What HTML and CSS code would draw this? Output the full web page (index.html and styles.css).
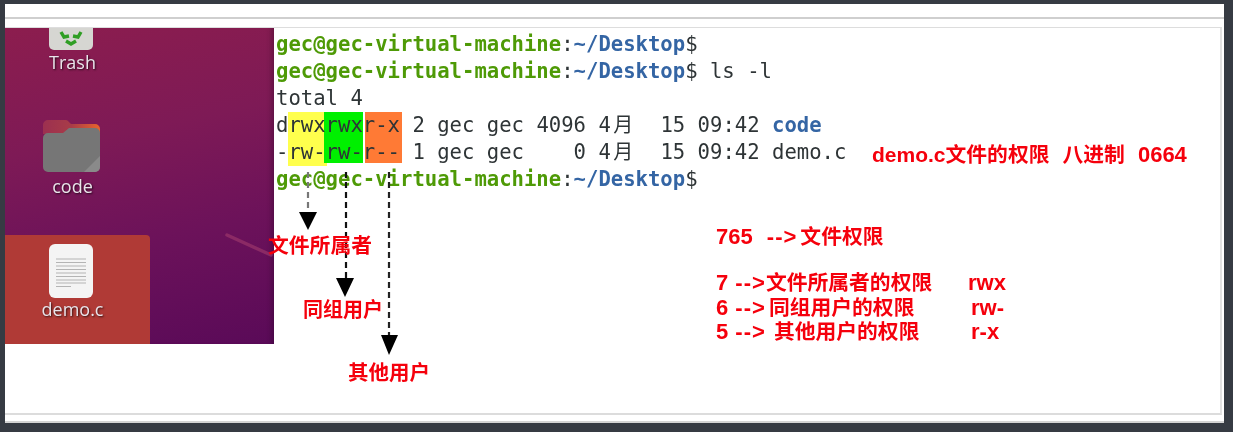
FILE: index.html
```html
<!DOCTYPE html>
<html lang="zh">
<head>
<meta charset="utf-8">
<title>ls -l</title>
<link rel="stylesheet" href="styles.css">
</head>
<body>
<div class="frame">
  <div class="topbar"></div>
  <div class="shot">
    <aside class="desktop">
      <svg class="streak" width="60" height="30" viewBox="0 0 60 30"><path d="M6 6 L50 26" stroke="#a8406f" stroke-width="3.500" stroke-linecap="round" fill="none" opacity=".55"/></svg>
      <div class="item item-trash">
        <svg class="shift" width="44" height="23" viewBox="0 0 44 23"><path d="M0 0H44V17a5 5 0 0 1-5 5H5a5 5 0 0 1-5-5Z" fill="#d6d6d2"/><path d="M12 4l3 5 5-1M32 4l-3 5-5-1M17 13l5 3 5-3" stroke="#2f9e24" stroke-width="3.400" fill="none"/></svg>
        <span class="label">Trash</span>
      </div>
      <div class="item item-code">
        <svg width="57" height="52" viewBox="0 0 57 52">
          <defs><linearGradient id="tab" x1="0" x2="1" y1="0" y2="0"><stop offset="0" stop-color="#9c3050"/><stop offset=".5" stop-color="#a83c48"/><stop offset="1" stop-color="#e8642c"/></linearGradient></defs>
          <path d="M0 14V5a5 5 0 0 1 5-5H22a4 4 0 0 1 3 1l3 3H52a5 5 0 0 1 5 5V14Z" fill="url(#tab)"/>
          <path d="M0 18a5 5 0 0 1 5-5H20l6-5H52a5 5 0 0 1 5 5V47a5 5 0 0 1-5 5H5a5 5 0 0 1-5-5Z" fill="#767676"/>
          <path d="M57 36L41 52H52a5 5 0 0 0 5-5Z" fill="#8a8a8a"/>
        </svg>
        <span class="label">code</span>
      </div>
      <div class="item item-demo">
        <svg class="shift" width="44" height="54" viewBox="0 0 44 54"><rect width="44" height="54" rx="6" fill="#f4f4f4"/><path d="M7 15H37M7 18.500H37M7 22H37M7 25.500H37M7 29H37M7 32.500H37M7 36H37M7 39H37" stroke="#b4b4b4" stroke-width="1"/><path d="M7 42.500H22" stroke="#b4b4b4" stroke-width="1"/></svg>
        <span class="label">demo.c</span>
      </div>
    </aside>
    <main class="term">
      <div class="line"><b class="g">gec@gec-virtual-machine</b>:<b class="b">~/Desktop</b>$</div>
      <div class="line"><b class="g">gec@gec-virtual-machine</b>:<b class="b">~/Desktop</b>$ ls -l</div>
      <div class="line">total 4</div>
      <div class="line top">d<span class="hy">rwx</span><span class="hg">rwx</span><span class="ho">r-x</span> 2 gec gec 4096 4<span class="cjk">月</span>  15 09:42 <b class="b">code</b></div>
      <div class="line bot">-<span class="hy">rw-</span><span class="hg">rw-</span><span class="ho">r--</span> 1 gec gec    0 4<span class="cjk">月</span>  15 09:42 demo.c</div>
      <div class="line"><b class="g">gec@gec-virtual-machine</b>:<b class="b">~/Desktop</b>$</div>
    </main>
    <svg class="arrows" width="120" height="190" viewBox="0 0 120 190">
      <g fill="none" stroke-width="2.200" stroke-dasharray="6 4">
        <path d="M15 0V38" stroke="#777"/>
        <path d="M53 0V106" stroke="#111"/>
        <path d="M96 0V164" stroke="#222"/>
      </g>
      <path d="M6 40H24L15 58Z M43 106H61L52 125Z M88 163H105L96 183Z" fill="#000"/>
    </svg>
    <span class="note n-owner">文件所属者</span>
    <span class="note n-group">同组用户</span>
    <span class="note n-other">其他用户</span>
    <span class="note n-octal"><span class="demo">demo.c</span>文件的权限<span class="gap1"></span>八进制<span class="gap2"></span><span class="num">0664</span></span>
    <span class="note n-765"><span class="num">765</span><span class="arr arr-wide"> --&gt;</span>文件权限</span>
    <div class="note perms">
      <span><span class="num">7</span><span class="arr"> --&gt;</span>文件所属者的权限</span><span class="num p1">rwx</span>
      <span><span class="num">6</span><span class="arr"> --&gt;</span><span class="in1">同组用户的权限</span></span><span class="num p2">rw-</span>
      <span><span class="num">5</span><span class="arr"> --&gt;</span><span class="in2">其他用户的权限</span></span><span class="num p2">r-x</span>
    </div>
  </div>
</div>
</body>
</html>
```
FILE: styles.css
```css
html, body { margin: 0; height: 432px; overflow: hidden; background: #363b43; }
.frame {
  margin: 4px 9px 0 5px; height: 419px; box-sizing: border-box;
  background: #fff; border-bottom: 2px solid #d4d4d4; filter: blur(.5px);
}
.topbar { height: 13px; border-bottom: 2px solid #cfcfcf; }
.shot {
  position: relative; display: flex; box-sizing: border-box;
  margin-top: 8px; height: 388px; margin-right: 2px;
  border-top: 1px solid #ddd; border-right: 2px solid #e2e2e2; border-bottom: 2px solid #dcdcdc;
}
.desktop {
  position: relative; flex: none; width: 269px; height: 316px; overflow: hidden;
  display: flex; flex-direction: column;
  background: linear-gradient(168deg, #8c1d4e 0%, #7e1a56 35%, #6c125a 65%, #5a0a58 100%);
  box-shadow: inset -6px 0 6px -5px rgba(30,0,30,.45);
}
.streak { position: absolute; left: 216px; top: 201px; }
.item {
  position: relative; width: 145px; box-sizing: border-box; padding-right: 12px;
  display: flex; flex-direction: column; align-items: center;
  font: 18px/22px "Open Sans", "Noto Sans", sans-serif;
}
.shift { margin-right: 2px; }
.label { margin-left: 2px; color: #e9e4ea; text-shadow: 1px 1px 2px rgba(0,0,0,.7); }
.item-trash { height: 92px; }
.item-code { height: 115px; }
.item-code .label { margin-top: 3px; }
.item-demo {
  height: 109px; padding-top: 9px;
  background: #b03a36; border-top-right-radius: 4px;
}
.term {
  flex: 1; padding: 2.500px 0 0 2px; color: #2e3436;
  font: 20.600px/27.200px "DejaVu Sans Mono", monospace;
}
.line { height: 27.200px; white-space: pre; }
.g { color: #4e9a06; }
.b { color: #3465a4; }
.cjk {
  display: inline-block; width: 24.800px; line-height: 20px; text-align: center;
  font-family: "Noto Sans CJK SC", sans-serif; font-size: 20px;
}
.hy, .hg, .ho { position: relative; }
.hy::before, .hg::before, .ho::before {
  content: ""; position: absolute; z-index: -1; top: -5px; bottom: -5px; left: 0; right: 0;
}
.hy::before { background: #ffff4d; right: -1px; }
.hg::before { background: #00f000; left: -2px; }
.ho::before { background: #ff7a35; left: 2px; right: -2px; }
.top .hy::before, .top .hg::before, .top .ho::before { top: -1px; bottom: -6px; }
.bot .hy::before { top: -5px; bottom: -2px; }
.bot .hg::before, .bot .ho::before { top: -5px; bottom: 1px; }
.arrows { position: absolute; left: 288px; top: 144px; }
.note {
  position: absolute; color: #f5000c; font-weight: 700; white-space: nowrap;
  font-family: "Liberation Sans", "Noto Sans CJK SC", sans-serif; font-size: 20.800px; line-height: 24px;
}
.n-owner { left: 263px; top: 206px; }
.n-group { left: 298px; top: 270px; font-size: 20px; }
.n-other { left: 343px; top: 333px; font-size: 20.500px; }
.n-octal { left: 867px; top: 115px; }
.demo { font-size: 21px; }
.gap1 { margin-left: 13px; }
.gap2 { margin-left: 13px; }
.num { font-size: 22px; }
.arr { font-size: 22px; letter-spacing: 1px; white-space: pre; }
.arr-wide { margin: 0 3px 0 7px; }
.n-765 { left: 711px; top: 197px; }
.perms {
  left: 711px; top: 243px; display: grid; grid-template-columns: 252px auto; grid-auto-rows: 24.500px;
}
.in1 { margin-left: 3px; }
.in2 { margin-left: 8px; }
.p2 { margin-left: 3px; }
```
